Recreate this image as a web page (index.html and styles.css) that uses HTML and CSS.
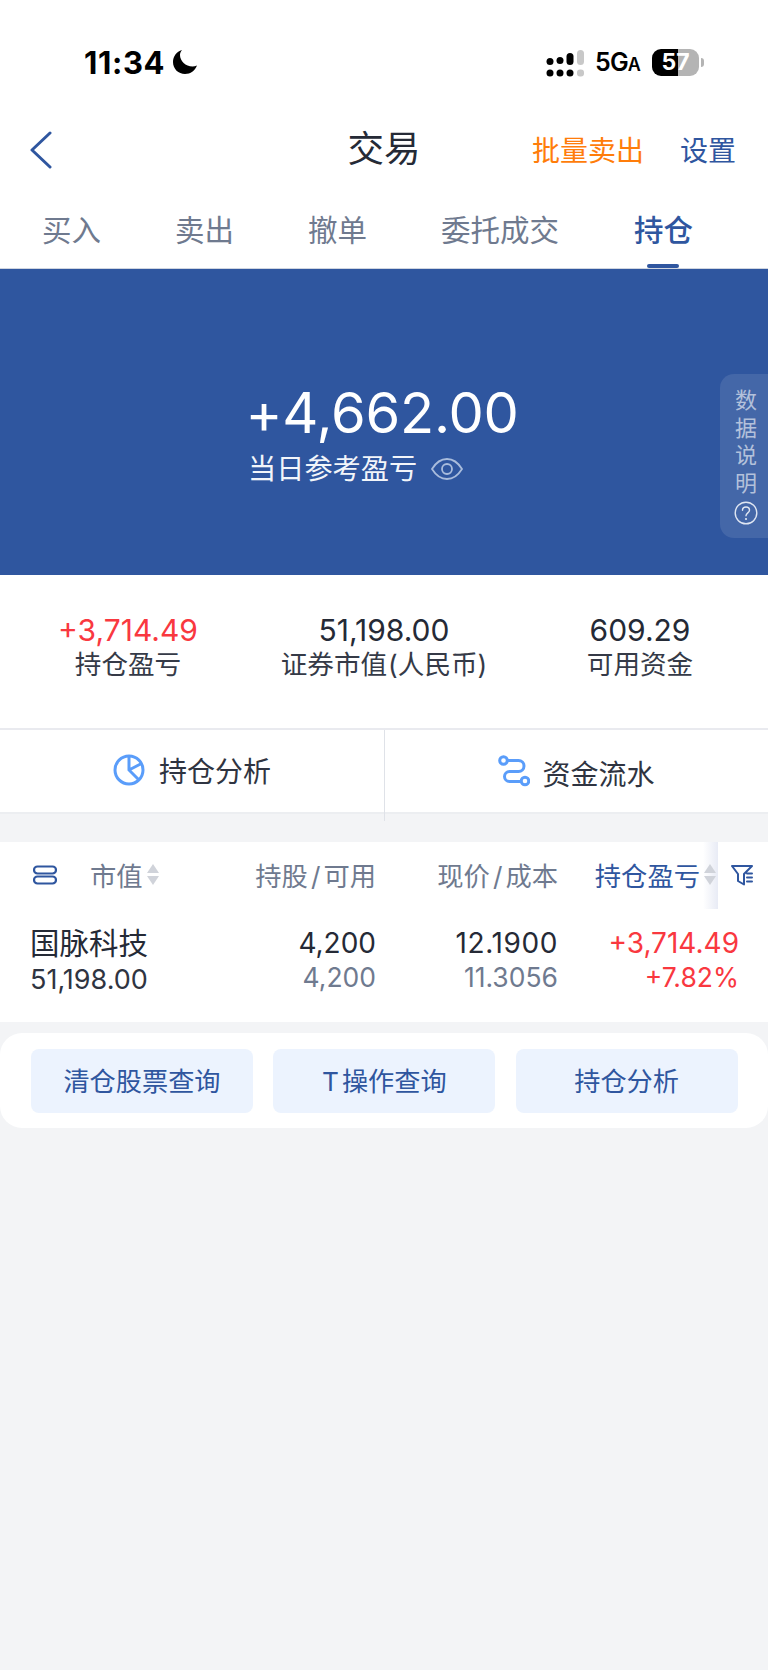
FILE: index.html
```html
<!DOCTYPE html>
<html lang="zh-CN">
<head>
<meta charset="utf-8">
<title>交易</title>
<link rel="stylesheet" href="styles.css">
</head>
<body>
<div class="page">
  <header class="status">
    <div class="status-left">
      <span class="clock">11:34</span>
      <svg class="moon" viewBox="0 0 26 26"><path d="M10 1C4.500 2.500 1 7.500 1 13c0 7 5.500 12 12 12 5.500 0 10-3.500 12-8.500-1.500.7-3 1-4.500 1C13.500 17.500 8 12 8 6c0-1.800.7-3.500 2-5z"/></svg>
    </div>
    <div class="status-right">
      <svg class="signal" viewBox="0 0 38 28">
        <circle cx="4" cy="11.500" r="3.500"/><circle cx="14" cy="10.500" r="3.500" /><rect x="20.500" y="3" width="7" height="12" rx="3.500"/><rect x="31" y="0" width="7" height="15" rx="3.500" class="dim"/>
        <circle cx="4" cy="23" r="3.500"/><circle cx="14" cy="23" r="3.500"/><circle cx="24" cy="23" r="3.500"/><rect x="31" y="19.500" width="7" height="7" rx="3" class="dim"/>
      </svg>
      <span class="net">5G<small>A</small></span>
      <span class="battery">57</span><span class="nub"></span>
    </div>
  </header>

  <nav class="nav">
    <svg class="back" viewBox="0 0 22 38"><path d="M20 2 2 19l18 17"/></svg>
    <h1 class="title">交易</h1>
    <div class="nav-actions">
      <span class="bulk">批量卖出</span>
      <span class="settings">设置</span>
    </div>
  </nav>

  <div class="tabs">
    <span class="tab">买入</span>
    <span class="tab">卖出</span>
    <span class="tab">撤单</span>
    <span class="tab">委托成交</span>
    <span class="tab active">持仓</span>
  </div>

  <section class="hero">
    <div class="hero-value">+4,662.00</div>
    <div class="hero-label">
      <span>当日参考盈亏</span>
      <svg class="eye" viewBox="0 0 32 26"><path d="M1 13C5 6.500 10 3 16 3s11 3.500 15 10c-4 6.500-9 10-15 10S5 19.500 1 13z"/><circle cx="16" cy="13" r="5"/></svg>
    </div>
    <aside class="explain">
      <span>数</span><span>据</span><span>说</span><span>明</span>
      <svg class="help" viewBox="0 0 24 24"><circle cx="12" cy="12" r="10.800"/><path d="M8.500 9.300c0-2 1.600-3.300 3.500-3.300s3.500 1.300 3.500 3.200c0 2.600-3.500 2.800-3.500 5.600"/><circle class="dot" cx="12" cy="18" r="1.100"/></svg>
    </aside>
  </section>

  <section class="stats">
    <div class="stat"><div class="stat-num up">+3,714.49</div><div class="stat-label">持仓盈亏</div></div>
    <div class="stat"><div class="stat-num">51,198.00</div><div class="stat-label">证券市值<span class="paren">(人民币)</span></div></div>
    <div class="stat"><div class="stat-num">609.29</div><div class="stat-label">可用资金</div></div>
  </section>

  <section class="actions">
    <div class="action">
      <svg class="action-icon" viewBox="0 0 32 32"><circle cx="16" cy="16" r="14"/><path d="M16 2.500V16l9.500 9.500M16 16 28.500 9.500"/></svg>
      <span>持仓分析</span>
    </div>
    <div class="action action-second">
      <svg class="action-icon flow" viewBox="0 0 32 32"><circle cx="5.500" cy="5.500" r="3.800"/><circle cx="27" cy="26" r="3.800"/><path d="M9.500 5.500h11a5.500 5.500 0 0 1 0 11h-9a5 5 0 0 0 0 10H23"/></svg>
      <span>资金流水</span>
    </div>
  </section>

  <section class="table">
    <div class="table-head">
      <div class="head-first">
        <svg class="rows-icon" viewBox="0 0 24 20"><rect x="1" y="1.500" width="22" height="7" rx="3.500"/><rect x="1" y="11.500" width="22" height="7" rx="3.500"/></svg>
        <span>市值</span>
        <span class="sort"><i class="tri-up"></i><i class="tri-down"></i></span>
      </div>
      <div class="head-cell">持股<span class="slash">/</span>可用</div>
      <div class="head-cell">现价<span class="slash">/</span>成本</div>
      <div class="head-cell head-active">持仓盈亏<span class="sort"><i class="tri-up"></i><i class="tri-down"></i></span></div>
      <div class="filter-col">
        <svg class="filter" viewBox="0 0 22 22"><path d="M1 2h20l-8 8v10.500L7 17v-7zM16 9.500h5M16 13.500h5M16 17.500h5"/></svg>
      </div>
    </div>
    <div class="table-row">
      <div class="cell-name"><div class="name">国脉科技</div><div class="cap">51,198.00</div></div>
      <div class="cell"><div class="main">4,200</div><div class="sub">4,200</div></div>
      <div class="cell"><div class="main spaced">12.1900</div><div class="sub">11.3056</div></div>
      <div class="cell up"><div class="main">+3,714.49</div><div class="sub">+7.82%</div></div>
    </div>
  </section>

  <section class="tools">
    <button class="tool">清仓股票查询</button>
    <button class="tool"><span class="tool-t">T</span>操作查询</button>
    <button class="tool">持仓分析</button>
  </section>
</div>
</body>
</html>
```
FILE: styles.css
```css
* { box-sizing: border-box; }
html, body { margin: 0; padding: 0; }
body {
  background: #f3f4f6;
  color: #252a36;
  font-family: Inter, "Noto Sans CJK SC", "Liberation Sans", sans-serif;
}
.page { width: 768px; height: 1670px; overflow: hidden; }

/* system status bar */
.status {
  height: 115px;
  background: #fff;
  padding: 46px 64px 0 84px;
  display: flex;
  justify-content: space-between;
  align-items: flex-start;
  color: #000;
}
.status-left { display: flex; align-items: center; gap: 7px; height: 32px; }
.clock { font-size: 31px; font-weight: 700; letter-spacing: 0.6px; line-height: 32px; padding-top: 2px; }
.moon { width: 26px; height: 26px; fill: #000; }
.status-right { display: flex; align-items: center; height: 32px; }
.signal { width: 38px; height: 28px; fill: #000; margin: 3px 11px 0 0; }
.signal .dim { fill: #c8c8c8; }
.net { font-size: 25px; font-weight: 600; line-height: 32px; width: 57px; letter-spacing: -0.8px; padding-top: 3px; }
.net small { font-size: 18px; font-weight: 600; }
.battery {
  width: 47px;
  height: 27px;
  border-radius: 9px;
  background: linear-gradient(90deg, #000 55%, #b4b4b4 55%);
  color: #fff;
  font-size: 23px;
  font-weight: 700;
  line-height: 27px;
  text-align: center;
}
.nub {
  width: 3px;
  height: 9px;
  margin-left: 2px;
  background: #b4b4b4;
  border-radius: 0 3px 3px 0;
}

/* title bar */
.nav {
  height: 70px;
  background: #fff;
  padding: 0 32px 0 30px;
  display: flex;
  align-items: center;
  justify-content: space-between;
  position: relative;
}
.back { width: 22px; height: 38px; fill: none; stroke: #2f569f; stroke-width: 3; stroke-linecap: round; stroke-linejoin: round; }
.title {
  position: absolute;
  left: 0;
  right: 0;
  top: 12px;
  margin: 0;
  text-align: center;
  font-size: 36.500px;
  font-weight: 400;
  line-height: 44px;
  pointer-events: none;
}
.nav-actions { display: flex; gap: 36px; font-size: 28px; line-height: 40px; padding-top: 1px; }
.bulk { color: #ff7d0a; }
.settings { color: #2f569f; }

/* trade tabs */
.tabs {
  height: 84px;
  background: #fff;
  border-bottom: 1px solid #cfd5e0;
  padding: 0 0 0 42px;
  display: flex;
  gap: 74px;
}
.tab {
  position: relative;
  font-size: 29.500px;
  line-height: 40px;
  padding-top: 25px;
  color: #6f7a8f;
  white-space: nowrap;
}
.tab.active { color: #2f569f; font-weight: 500; margin-left: 1px; }
.tab.active::after {
  content: "";
  position: absolute;
  left: 13px;
  top: 79px;
  width: 32px;
  height: 4px;
  border-radius: 2px;
  background: #2f569f;
}

/* daily profit banner */
.hero {
  position: relative;
  height: 306px;
  background: #2f569f;
  color: #fff;
  display: flex;
  flex-direction: column;
  align-items: center;
  padding-top: 106px;
}
.hero-value { font-size: 56px; letter-spacing: -0.2px; line-height: 76px; font-weight: 400; width: 277px; white-space: nowrap; }
.hero-label { width: 272px; display: flex; align-items: center; font-size: 28.200px; line-height: 40px; margin-top: -2px; color: #f2f5fa; }
.eye { width: 32px; height: 26px; margin-left: 14px; fill: none; stroke: #a9bcdc; stroke-width: 1.800; }
.explain {
  position: absolute;
  right: 0;
  top: 105px;
  width: 48px;
  height: 164px;
  padding: 13px 0 0 4px;
  border-radius: 14px 0 0 14px;
  background: rgba(255, 255, 255, 0.1);
  color: rgba(255, 255, 255, 0.6);
  font-size: 22px;
  line-height: 27.500px;
  display: flex;
  flex-direction: column;
  align-items: center;
}
.help { width: 24px; height: 24px; margin-top: 4px; fill: none; stroke: #dfe6f2; stroke-width: 1.400; stroke-linecap: round; }
.help .dot { fill: #dfe6f2; stroke: none; }

/* account summary */
.stats {
  height: 153px;
  background: #fff;
  display: grid;
  grid-template-columns: repeat(3, 1fr);
  padding-top: 35px;
  text-align: center;
}
.stat-num { font-size: 30px; line-height: 40px; }
.stat-label { font-size: 26.600px; line-height: 36px; margin-top: -4px; color: #353a47; }
.paren { margin-left: 1px; }
.stat-num.up { color: #f9383f; }

/* analysis shortcuts */
.actions {
  position: relative;
  height: 86px;
  background: #fff;
  border-top: 2px solid #e9eaef;
  border-bottom: 2px solid #eceef1;
  display: grid;
  grid-template-columns: 385px 383px;
}
.actions::after {
  content: "";
  position: absolute;
  left: 384px;
  top: 0;
  width: 1px;
  height: 91px;
  background: #dfe2e8;
}
.action { display: flex; align-items: center; justify-content: center; gap: 14px; font-size: 28px; color: #2f3441; padding: 0 1px 2px 0; }
.action-second { gap: 12px; padding: 3px 0 0; }
.action-icon { width: 32px; height: 32px; fill: none; stroke: #5a9dfa; stroke-width: 3; }
.action-icon.flow { margin-top: -3px; }

/* holdings table */
.table { margin-top: 28px; background: #fff; height: 180px; }
.table-head {
  position: relative;
  height: 67px;
  padding: 0 52px 2px 33px;
  display: grid;
  grid-template-columns: 202px 141px 182px 1fr;
  align-items: center;
  font-size: 26.300px;
  color: #6f7a8f;
}
.head-first { display: flex; align-items: center; }
.rows-icon { width: 24px; height: 20px; fill: none; stroke: #2f569f; stroke-width: 2.200; margin-right: 33px; }
.head-cell { text-align: right; white-space: nowrap; }
.slash { margin: 0 3px; }
.head-active { color: #2f569f; display: flex; justify-content: flex-end; align-items: center; }
.sort { position: relative; z-index: 1; display: inline-flex; flex-direction: column; gap: 3px; margin-left: 4px; }
.tri-up, .tri-down { display: block; width: 0; height: 0; border-left: 6.500px solid transparent; border-right: 6.500px solid transparent; }
.tri-up { border-bottom: 9px solid #d0d3da; }
.tri-down { border-top: 9px solid #d0d3da; }
.filter-col {
  position: absolute;
  right: 0;
  top: 0;
  bottom: 0;
  width: 50px;
  background: #fff;
  display: flex;
  align-items: center;
  padding: 0 0 2px 13px;
}
.filter-col::before {
  content: "";
  position: absolute;
  left: -15px;
  top: 0;
  bottom: 0;
  width: 15px;
  background: linear-gradient(90deg, rgba(232, 235, 245, 0), #e8ebf5);
}
.filter { width: 22px; height: 22px; fill: none; stroke: #2f569f; stroke-width: 2; stroke-linejoin: round; stroke-linecap: round; }
.table-row {
  height: 113px;
  padding: 14px 29px 0 30px;
  display: grid;
  grid-template-columns: 206px 140px 182px 1fr;
}
.name { font-size: 29.500px; line-height: 40px; }
.cap { font-size: 27px; line-height: 34px; color: #2f3441; }
.cell { text-align: right; }
.main { font-size: 28px; line-height: 40px; }
.spaced { letter-spacing: 0.6px; }
.sub { font-size: 26.500px; line-height: 28px; color: #6f7a8f; }
.cell.up .main, .cell.up .sub { color: #f9383f; }

/* lookup buttons */
.tools {
  margin-top: 11px;
  height: 95px;
  background: #fff;
  border-radius: 22px;
  padding: 16px 30px 0 31px;
  display: grid;
  grid-template-columns: repeat(3, 222px);
  gap: 20.300px;
}
.tool {
  height: 64px;
  border: 0;
  border-radius: 8px;
  background: #ecf3fe;
  color: #2f569f;
  font: inherit;
  font-size: 26.200px;
  padding: 0 0 2px;
}
.tool-t { margin-right: 3px; }
```
